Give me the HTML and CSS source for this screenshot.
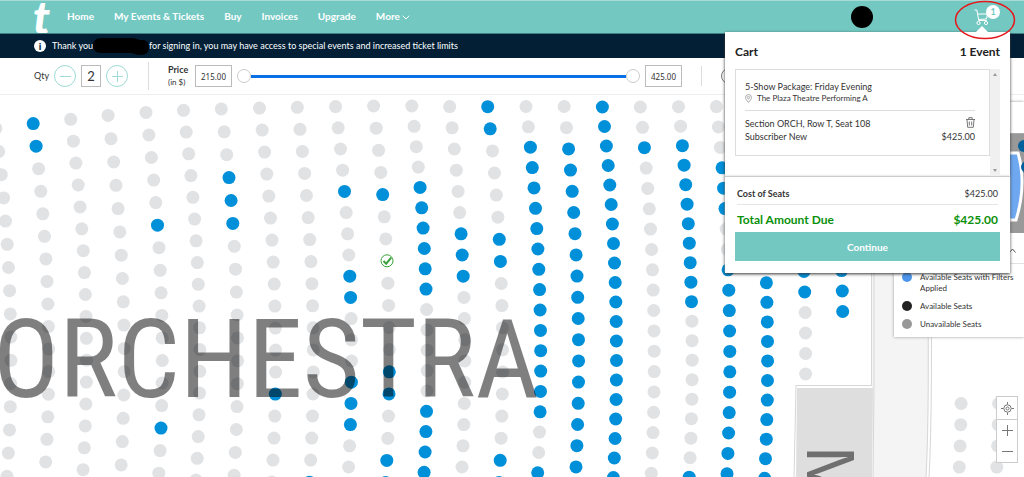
FILE: index.html
```html
<!DOCTYPE html>
<html lang="en">
<head>
<meta charset="utf-8">
<title>Select seats</title>
<link rel="stylesheet" href="styles.css">
</head>
<body>
<header class="topbar">
  <a class="logo" href="#" aria-label="Home page">t</a>
  <nav class="nav">
    <a href="#">Home</a>
    <a href="#">My Events &amp; Tickets</a>
    <a href="#">Buy</a>
    <a href="#">Invoices</a>
    <a href="#">Upgrade</a>
    <a href="#">More<svg class="caret" width="8" height="5" viewBox="0 0 8 5"><path d="M.7 .7 4 4 7.3 .7"/></svg></a>
  </nav>
  <span class="avatar"></span>
  <button class="cart-button" aria-label="Cart, 1 item">
    <svg width="16" height="17" viewBox="0 0 16 17"><path d="M.5 1h2.300l2 10.500h8M4 5h9.500l-1 5-8 .5"/><circle cx="4.500" cy="14" r="1.600"/><circle cx="12" cy="14" r="1.600"/></svg>
    <span class="cart-count">1</span>
  </button>
</header>

<div class="notice">
  <span class="info">i</span>
  <span>Thank you</span>
  <svg class="redacted" width="56" height="17" viewBox="0 0 56 17"><path d="M8 0H39C43 0 44 2 49 2C54 2 56 5 56 9C56 14 53 17 48 17C42 17 41 15 37 15H8C3 15 0 12 0 7.500S3 0 8 0Z"/></svg>
  <span>for signing in, you may have access to special events and increased ticket limits</span>
</div>

<form class="filters">
  <div class="qty">
    <label for="qty">Qty</label>
    <button type="button" class="round" aria-label="Fewer"><svg width="11" height="11" viewBox="0 0 11 11"><path d="M0 5.500H11"/></svg></button>
    <input id="qty" class="qty-input" value="2">
    <button type="button" class="round" aria-label="More"><svg width="11" height="11" viewBox="0 0 11 11"><path d="M0 5.500H11M5.500 0V11"/></svg></button>
  </div>
  <div class="price">
    <label class="price-label" for="low">Price<small>(in $)</small></label>
    <input id="low" class="price-input" value="215.00">
    <div class="range"><span class="knob"></span><span class="track"></span><span class="knob"></span></div>
    <input class="price-input" value="425.00" aria-label="Highest price">
  </div>
  <div class="more-filters"><span class="more-circle"></span></div>
</form>

<main class="map">
  <svg id="seats" class="seats" width="1024" height="383" viewBox="0 94 1024 383">
    <path class="aisle" d="M872 240V384L873 477H926Q930 400 928 240Z"/>
    <path class="wall" d="M871.500 240V384.500H796L794 477M874 240V386.500L873 477M927 240Q930 400 926 477M930.500 240Q933 400 929 477"/>
    <path class="box" d="M797 387H873L872 477H796Z"/>
    <g id="dots"></g>
    <g class="picked"><circle cx="387" cy="259.800" r="6"/><path d="m383.500 260 2.700 2.700 5-6"/></g>
    <text class="section" x="-7" y="396">ORCHESTRA</text>
    <text class="section-box" transform="translate(807 445) rotate(90)">M</text>
  </svg>
</main>

<aside class="overview">
  <div class="mini-head"></div>
  <svg class="mini" width="100%" height="99" viewBox="0 0 130 99" preserveAspectRatio="xMaxYMid slice"><rect width="130" height="99" fill="#999"/><path d="M100 19H124Q133 50 122 86H100Z" fill="#6ea8f0" stroke="#fff" stroke-width="3"/><circle cx="130" cy="12" r="6" fill="#00609b"/><circle cx="133" cy="33" r="6" fill="#00609b"/></svg>
  <div class="legend-head"><svg width="7" height="5" viewBox="0 0 7 5"><path d="M.5 4.500 3.500 1 6.500 4.500"/></svg></div>
  <ul class="legend">
    <li><i class="swatch blue"></i>Available Seats with Filters Applied</li>
    <li><i class="swatch black"></i>Available Seats</li>
    <li><i class="swatch gray"></i>Unavailable Seats</li>
  </ul>
</aside>

<div class="zoom">
  <button aria-label="Recenter"><svg width="13" height="13" viewBox="0 0 13 13"><circle cx="6.500" cy="6.500" r="3.700"/><circle cx="6.500" cy="6.500" r="1.500"/><path d="M6.500 0V2.500M6.500 10.500V13M0 6.500H2.500M10.500 6.500H13"/></svg></button>
  <button aria-label="Zoom in"><svg width="11" height="11" viewBox="0 0 11 11"><path d="M0 5.500H11M5.500 0V11"/></svg></button>
  <button aria-label="Zoom out"><svg width="11" height="11" viewBox="0 0 11 11"><path d="M0 5.500H11"/></svg></button>
</div>

<section class="cart">
  <header class="cart-head"><h2>Cart</h2><h2>1 Event</h2></header>
  <div class="cart-scroll">
    <div class="item">
      <h3>5-Show Package: Friday Evening</h3>
      <p class="venue"><svg width="7" height="9" viewBox="0 0 7 9"><path d="M3.500 8.500C2 6.500.5 5 .5 3.500a3 3 0 0 1 6 0C6.500 5 5 6.500 3.500 8.500Z"/><circle cx="3.500" cy="3.500" r="1.200"/></svg>The Plaza Theatre Performing A</p>
      <div class="seat">
        <div class="row"><span>Section ORCH, Row T, Seat 108</span><button class="trash" aria-label="Remove"><svg width="9" height="11" viewBox="0 0 9 11"><path d="M0 2.500H9M2.800 2.500V.7H6.200V2.500M1 3 1.700 10.300H7.300L8 3M3.300 4.500V8.500M5.700 4.500V8.500"/></svg></button></div>
        <div class="row"><span>Subscriber New</span><span>$425.00</span></div>
      </div>
    </div>
    <div class="scrollbar"><i class="up"></i><i class="down"></i></div>
  </div>
  <div class="totals">
    <div class="cost"><b>Cost of Seats</b><span>$425.00</span></div>
    <div class="due"><span>Total Amount Due</span><span>$425.00</span></div>
    <button class="continue">Continue</button>
  </div>
</section>
<svg class="highlight" width="62" height="40" viewBox="0 0 62 40"><path class="pointer" d="M21 33 28 26 35 33Z"/><ellipse cx="31" cy="20" rx="29.500" ry="18.500"/></svg>
<script src="seats.js"></script>
</body>
</html>
```
FILE: styles.css
```css
* { box-sizing: border-box; }
body { margin: 0; min-height: 100vh; display: flex; flex-direction: column; position: relative; overflow: hidden; background: #fff; color: #333; font: 9px/14px Lato, "Open Sans", sans-serif; }
button, input { font: inherit; color: inherit; padding: 0; margin: 0; background: none; border: 0; }
a { color: inherit; text-decoration: none; }
h2, h3, p, ul { margin: 0; padding: 0; font-weight: normal; }
svg { fill: none; stroke: currentColor; flex: none; }

.topbar { height: 33px; display: flex; align-items: center; background: #73c9c2; border-top: 1px solid #a9dbd6; padding: 0 24px 0 33px; color: #fff; }
.logo { width: 34px; font: italic 900 46px/30px Lato, sans-serif; }
.nav { display: flex; gap: 20px; flex: 1; padding-bottom: 2px; font-size: 10px; font-weight: bold; }
.caret { margin-left: 2px; }
.avatar { width: 22px; height: 22px; border-radius: 50%; background: #000; margin-right: 101px; }
.cart-button { display: flex; width: 26px; height: 28px; position: relative; align-items: center; }
.cart-count { position: absolute; left: 12px; top: 2px; width: 14px; height: 14px; border-radius: 50%; background: #fff; color: #73c9c2; font-size: 9px; line-height: 14px; font-weight: bold; }

.notice { height: 25px; display: flex; align-items: center; background: #021f36; color: #fff; padding-left: 34px; border-top: 1px solid #3f7f83; }
.info { width: 12px; height: 12px; border-radius: 50%; background: #fff; color: #021f36; font-size: 10px; font-weight: 900; line-height: 12px; text-align: center; margin-right: 6px; }
.redacted { fill: #000; stroke: none; }

.filters { height: 37px; display: flex; align-items: center; padding-left: 34px; border-bottom: 1px solid #eee; background: #fff; }
.qty { display: flex; align-items: center; width: 115px; gap: 5px; height: 28px; border-right: 1px solid #ddd; }
.round { width: 22px; height: 22px; border: 1px solid #9edbd5; border-radius: 50%; color: #9edbd5; display: grid; place-items: center; }
.qty-input { width: 20px; height: 22px; border: 1px solid #bbb; text-align: center; font-size: 13px; }
.price { display: flex; align-items: center; padding: 0 19px; width: 553px; height: 20px; border-right: 1px solid #ddd; }
.price-label { width: 27px; font-weight: bold; line-height: 13px; }
.price-label small { display: block; font-size: 8px; font-weight: normal; }
.price-input { width: 37px; height: 22px; border: 1px solid #bbb; text-align: center; font: 8px "Noto Sans", sans-serif; }
.range { display: flex; align-items: center; flex: 1; margin: 0 5px; }
.knob { width: 14px; height: 14px; border: 1px solid #ccc; border-radius: 50%; }
.track { flex: 1; height: 3px; background: #0871e5; }
.more-filters { padding-left: 19px; }
.more-circle { display: block; width: 16px; height: 16px; border: 1px solid #777; border-radius: 50%; }

.map { flex: 1; overflow: hidden; }
.seats { display: block; stroke: none; }
.free { fill: #008fd9; }
.taken { fill: #e1e2e4; }
.aisle { fill: #f4f4f4; }
.wall { stroke: #d6d6d6; stroke-width: 1; }
.box { fill: #dedede; }
.section, .section-box { font-family: "Roboto Condensed", Roboto, sans-serif; font-size: 110px; fill: #000; fill-opacity: .5; }
.section-box { font: 68px "Liberation Sans", sans-serif; }
.picked circle { fill: #fff; stroke: #39a339; }
.picked path { stroke: #39a339; stroke-width: 2; }

.overview { position: absolute; right: 0; top: 102px; width: 130px; background: #fff; box-shadow: 0 0 3px #999; }
.mini-head { height: 32px; border-bottom: 1px solid #aaa; }
.mini { display: block; stroke: none; }
.legend-head { height: 31px; border-top: 4px solid #fff; border-bottom: 1px solid #e2e2e2; padding: 0 8px; display: flex; justify-content: flex-end; align-items: center; color: #555; }
.legend { list-style: none; padding: 8px 8px 7px; display: flex; flex-direction: column; gap: 7px; font-size: 8px; line-height: 11px; }
.legend li { display: flex; gap: 8px; }
.swatch { width: 10px; height: 10px; border-radius: 50%; flex: none; }
.blue { background: #4b96ec; }
.black { background: #222; }
.gray { background: #999; }

.zoom { position: absolute; right: 6px; top: 396px; width: 22px; border: 1px solid #ccc; background: #fff; color: #777; display: grid; }
.zoom button { height: 21px; display: grid; place-items: center; }
.zoom button:first-child { height: 23px; border-bottom: 1px solid #ccc; }

.cart { position: absolute; right: 14px; top: 32px; width: 285px; background: #fff; box-shadow: 0 1px 3px #333; }
.cart-head { display: flex; justify-content: space-between; padding: 12px 10px 10px; height: 37px; }
.cart-head h2 { font: bold 12px/15px Lato, sans-serif; color: #222; }
.cart-scroll { display: flex; margin: 0 10px; height: 107px; }
.item { flex: 1; height: 87px; border: 1px solid #ddd; padding: 10px 14px 0 9px; line-height: 13px; }
.item h3 { font-size: 9px; }
.venue { display: flex; align-items: center; gap: 5px; font-size: 8px; line-height: 11px; padding-bottom: 6px; border-bottom: 1px solid #ddd; }
.venue svg { color: #aaa; }
.seat { padding-top: 6px; }
.row { display: flex; justify-content: space-between; }
.trash { display: flex; color: #777; }
.scrollbar { width: 10px; background: #f0f0f0; display: flex; flex-direction: column; justify-content: space-between; align-items: center; padding: 4px 0; }
.up, .down { border: 2px solid transparent; }
.up { border-bottom: 3px solid #999; border-top: 0; }
.down { border-top: 3px solid #999; border-bottom: 0; }
.totals { border-top: 1px solid #ccc; padding: 10px; box-shadow: 0 -1px 1px #eee; }
.cost, .due { display: flex; justify-content: space-between; margin: 0 2px; }
.cost { height: 18px; border-bottom: 1px solid #e5e5e5; }
.due { color: #0b910b; font-size: 12px; font-weight: bold; line-height: 16px; padding: 7px 0 4px; }
.continue { display: block; width: 100%; height: 29px; background: #73c9c2; color: #fff; font-size: 10px; font-weight: bold; margin-bottom: 2px; }
.highlight { position: absolute; right: 8px; top: 0; stroke: #e5181b; stroke-width: 1.5; }
.pointer { fill: #fff; stroke: none; }
```
FILE: seats.js
```js
// Each column: x at its widest point, first y, spacing, seat count, free seat ranges.
const columns = [
  [10.9, 127.3, 23.2, 16, []],
  [48.7, 122.6, 22.55, 17, [[0, 1]]],
  [86.5, 118.3, 21.9, 18, []],
  [124.2, 114.4, 23.3, 17, []],
  [162.3, 111.4, 22.55, 18, [[5, 5], [14, 14]]],
  [199.8, 109.3, 21.75, 18, []],
  [237.6, 107.9, 22.9, 17, [[3, 5]]],
  [275.6, 107.1, 22, 18, [[13, 13]]],
  [313.3, 106.3, 22.05, 18, [[17, 17]]],
  [351.5, 105.6, 21.2, 18, [[4, 4], [8, 9], [13, 15]]],
  [389.3, 105, 22.15, 18, [[4, 4], [12, 13], [16, 17]]],
  [427.2, 105, 20.35, 19, [[4, 9], [15, 18]]],
  [464.8, 105.6, 21.2, 18, [[6, 8]]],
  [502.6, 105.7, 22.1, 18, [[0, 1], [6, 7], [16, 17]]],
  [540.7, 105.5, 20.35, 19, [[2, 15], [18, 18]]],
  [578.6, 105.5, 21.2, 18, [[2, 17]]],
  [616.5, 106, 19.5, 20, [[0, 19]]],
  [654.2, 106, 20.35, 19, [[2, 2]]],
  [692.2, 105.7, 19.5, 20, [[2, 10], [19, 19]]],
  [729.8, 105.6, 20.4, 19, [[3, 5], [8, 18]]],
  [767.6, 105.8, 19.55, 20, [[0, 19]]],
  [805.6, 106.5, 20.5, 14, [[0, 9]]],
  [843.2, 106, 20.45, 11, [[0, 10]]],
  [961.5, 402.5, 21.2, 4, []],
  [999, 402.5, 21.2, 4, []]
];
const dots = document.getElementById("dots");
columns.forEach(([x, top, step, count, free], column) => {
  const bend = 0.000284 - x * 1e-7;
  for (let i = 0; i < count; i++) {
    if (column === 10 && i === 7) continue;
    const y = top + i * step;
    const dot = document.createElementNS("http://www.w3.org/2000/svg", "circle");
    dot.setAttribute("cx", (x - bend * (y - 358) ** 2).toFixed(1));
    dot.setAttribute("cy", y.toFixed(1));
    dot.setAttribute("r", 6.5);
    dot.setAttribute("class", free.some(([a, b]) => i >= a && i <= b) ? "free" : "taken");
    dots.append(dot);
  }
});
```
